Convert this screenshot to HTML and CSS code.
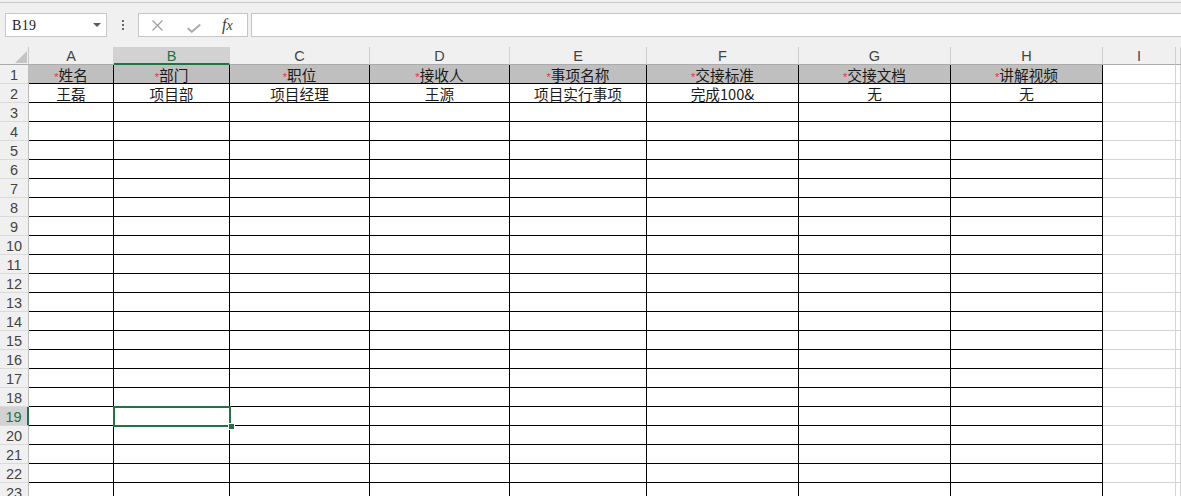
FILE: index.html
```html
<!DOCTYPE html>
<html lang="zh-CN">
<head>
<meta charset="utf-8">
<title>Sheet</title>
<link rel="stylesheet" href="styles.css">
</head>
<body>
<div class="topline"></div>
<div class="fbar">
  <div class="namebox"><span>B19</span><svg class="dd" width="8" height="4" viewBox="0 0 8 4"><polygon points="0,0 8,0 4,4" fill="#5a5a5a"/></svg></div>
  <div class="dots"><i></i><i></i><i></i></div>
  <div class="fbtns">
    <svg class="ico-x" width="11" height="11" viewBox="0 0 11 11"><path d="M0.5 0.5L10.5 10.5M10.5 0.5L0.5 10.5" stroke="#a0a0a0" stroke-width="1.3" fill="none"/></svg>
    <svg class="ico-ok" width="14" height="9" viewBox="0 0 14 9"><path d="M0.7 4.2L4.8 7.8L13.3 0.6" stroke="#a8a8a8" stroke-width="1.9" fill="none"/></svg>
    <span class="fx"><i>f</i><i class="x">x</i></span>
  </div>
  <div class="finput"></div>
</div>
<div class="sheet">
  <div class="corner"><svg width="12" height="12" viewBox="0 0 12 12"><polygon points="12,0 12,12 0,12" fill="#c4c4c4"/></svg></div>
  <div class="ch">A</div><div class="ch on">B</div><div class="ch">C</div><div class="ch">D</div><div class="ch">E</div><div class="ch">F</div><div class="ch">G</div><div class="ch">H</div><div class="ch">I</div><div class="ch"></div>

  <div class="rh">1</div>
  <div class="c hd"><span class="req">*</span>姓名</div>
  <div class="c hd"><span class="req">*</span>部门</div>
  <div class="c hd"><span class="req">*</span>职位</div>
  <div class="c hd"><span class="req">*</span>接收人</div>
  <div class="c hd"><span class="req">*</span>事项名称</div>
  <div class="c hd"><span class="req">*</span>交接标准</div>
  <div class="c hd"><span class="req">*</span>交接文档</div>
  <div class="c hd"><span class="req">*</span>讲解视频</div>
  <div class="g"></div><div class="g"></div>

  <div class="rh">2</div>
  <div class="c">王磊</div><div class="c">项目部</div><div class="c">项目经理</div><div class="c">王源</div><div class="c">项目实行事项</div><div class="c">完成100&amp;</div><div class="c">无</div><div class="c">无</div>
  <div class="g"></div><div class="g"></div>

  <div class="rh">3</div><div class="c"></div><div class="c"></div><div class="c"></div><div class="c"></div><div class="c"></div><div class="c"></div><div class="c"></div><div class="c"></div><div class="g"></div><div class="g"></div>
  <div class="rh">4</div><div class="c"></div><div class="c"></div><div class="c"></div><div class="c"></div><div class="c"></div><div class="c"></div><div class="c"></div><div class="c"></div><div class="g"></div><div class="g"></div>
  <div class="rh">5</div><div class="c"></div><div class="c"></div><div class="c"></div><div class="c"></div><div class="c"></div><div class="c"></div><div class="c"></div><div class="c"></div><div class="g"></div><div class="g"></div>
  <div class="rh">6</div><div class="c"></div><div class="c"></div><div class="c"></div><div class="c"></div><div class="c"></div><div class="c"></div><div class="c"></div><div class="c"></div><div class="g"></div><div class="g"></div>
  <div class="rh">7</div><div class="c"></div><div class="c"></div><div class="c"></div><div class="c"></div><div class="c"></div><div class="c"></div><div class="c"></div><div class="c"></div><div class="g"></div><div class="g"></div>
  <div class="rh">8</div><div class="c"></div><div class="c"></div><div class="c"></div><div class="c"></div><div class="c"></div><div class="c"></div><div class="c"></div><div class="c"></div><div class="g"></div><div class="g"></div>
  <div class="rh">9</div><div class="c"></div><div class="c"></div><div class="c"></div><div class="c"></div><div class="c"></div><div class="c"></div><div class="c"></div><div class="c"></div><div class="g"></div><div class="g"></div>
  <div class="rh">10</div><div class="c"></div><div class="c"></div><div class="c"></div><div class="c"></div><div class="c"></div><div class="c"></div><div class="c"></div><div class="c"></div><div class="g"></div><div class="g"></div>
  <div class="rh">11</div><div class="c"></div><div class="c"></div><div class="c"></div><div class="c"></div><div class="c"></div><div class="c"></div><div class="c"></div><div class="c"></div><div class="g"></div><div class="g"></div>
  <div class="rh">12</div><div class="c"></div><div class="c"></div><div class="c"></div><div class="c"></div><div class="c"></div><div class="c"></div><div class="c"></div><div class="c"></div><div class="g"></div><div class="g"></div>
  <div class="rh">13</div><div class="c"></div><div class="c"></div><div class="c"></div><div class="c"></div><div class="c"></div><div class="c"></div><div class="c"></div><div class="c"></div><div class="g"></div><div class="g"></div>
  <div class="rh">14</div><div class="c"></div><div class="c"></div><div class="c"></div><div class="c"></div><div class="c"></div><div class="c"></div><div class="c"></div><div class="c"></div><div class="g"></div><div class="g"></div>
  <div class="rh">15</div><div class="c"></div><div class="c"></div><div class="c"></div><div class="c"></div><div class="c"></div><div class="c"></div><div class="c"></div><div class="c"></div><div class="g"></div><div class="g"></div>
  <div class="rh">16</div><div class="c"></div><div class="c"></div><div class="c"></div><div class="c"></div><div class="c"></div><div class="c"></div><div class="c"></div><div class="c"></div><div class="g"></div><div class="g"></div>
  <div class="rh">17</div><div class="c"></div><div class="c"></div><div class="c"></div><div class="c"></div><div class="c"></div><div class="c"></div><div class="c"></div><div class="c"></div><div class="g"></div><div class="g"></div>
  <div class="rh">18</div><div class="c"></div><div class="c"></div><div class="c"></div><div class="c"></div><div class="c"></div><div class="c"></div><div class="c"></div><div class="c"></div><div class="g"></div><div class="g"></div>
  <div class="rh on">19</div><div class="c"></div><div class="c sel"></div><div class="c"></div><div class="c"></div><div class="c"></div><div class="c"></div><div class="c"></div><div class="c"></div><div class="g"></div><div class="g"></div>
  <div class="rh">20</div><div class="c"></div><div class="c"></div><div class="c"></div><div class="c"></div><div class="c"></div><div class="c"></div><div class="c"></div><div class="c"></div><div class="g"></div><div class="g"></div>
  <div class="rh">21</div><div class="c"></div><div class="c"></div><div class="c"></div><div class="c"></div><div class="c"></div><div class="c"></div><div class="c"></div><div class="c"></div><div class="g"></div><div class="g"></div>
  <div class="rh">22</div><div class="c"></div><div class="c"></div><div class="c"></div><div class="c"></div><div class="c"></div><div class="c"></div><div class="c"></div><div class="c"></div><div class="g"></div><div class="g"></div>
  <div class="rh">23</div><div class="c"></div><div class="c"></div><div class="c"></div><div class="c"></div><div class="c"></div><div class="c"></div><div class="c"></div><div class="c"></div><div class="g"></div><div class="g"></div>
</div>
</body>
</html>
```
FILE: styles.css
```css
*, *::before, *::after { box-sizing: border-box; margin: 0; padding: 0; }
html, body { width: 1181px; height: 496px; overflow: hidden; background: #fff; }
body { font-family: "Liberation Sans", Arial, sans-serif; }

.topline { height: 3px; background: #f0f0f0; border-bottom: 1px solid #c8c8c8; }

.fbar {
  height: 44px;
  background: #f0f0f0;
  display: flex;
  align-items: flex-start;
  padding: 10px 0 0 5px;
}
.namebox {
  width: 102px;
  height: 24px;
  background: #fff;
  border: 1px solid #c6c6c6;
  display: flex;
  align-items: center;
  padding: 1px 5px 0 6px;
  font: 14px "Liberation Serif", serif;
  color: #222;
  letter-spacing: 0.3px;
}
.namebox .dd { margin-left: auto; margin-top: -1px; }

.dots { margin: 7px 0 0 15px; display: flex; flex-direction: column; gap: 2px; }
.dots i { display: block; width: 2px; height: 2px; background: #6a6a6a; }

.fbtns {
  margin-left: 14px;
  width: 110px;
  height: 24px;
  background: #fff;
  border: 1px solid #c6c6c6;
  display: flex;
  align-items: flex-start;
  padding-left: 13px;
}
.ico-x { margin-top: 6px; }
.ico-ok { margin: 10px 0 0 24px; }
.fx {
  margin: 3px 0 0 21px;
  font: italic 16px "Liberation Serif", serif;
  color: #3c3c3c;
  line-height: 16px;
}
.fx i { font-style: italic; }
.fx .x { font-size: 14px; margin-left: 0; }

.finput {
  margin-left: 3px;
  flex: 1;
  height: 24px;
  background: #fff;
  border: 1px solid #c6c6c6;
  border-right: none;
}

.sheet {
  display: grid;
  grid-template-columns: 29px 85px 116px 140px 140px 137px 152px 152px 152px 73px 1fr;
  grid-template-rows: 18px;
  grid-auto-rows: 19px;
}
.sheet > div {
  border-right: 1px solid #000;
  border-bottom: 1px solid #000;
  white-space: nowrap;
}
.sheet > .corner {
  background: #f0f0f0;
  border-right-color: #c6c6c6;
  border-bottom-color: #ababab;
  display: flex;
  align-items: flex-end;
  justify-content: flex-end;
  padding: 0 1px 1px 0;
}
.sheet > .ch {
  background: #f0f0f0;
  border-right-color: #d0d0d0;
  border-bottom-color: #ababab;
  text-align: center;
  font-size: 14.5px;
  color: #444;
  padding-top: 2px;
  line-height: 15px;
  overflow: hidden;
}
.sheet > .ch.on {
  background: #d2d2d2;
  color: #217346;
  border-bottom: 2px solid #217346;
}
.sheet > .rh {
  background: #f0f0f0;
  border-right-color: #bdbdbd;
  border-bottom-color: #dadada;
  text-align: center;
  font-size: 14.5px;
  color: #444;
  padding-top: 2px;
  line-height: 16px;
  overflow: hidden;
}
.sheet > .rh.on {
  background: #d2d2d2;
  color: #217346;
  border-right: 2px solid #217346;
}
.sheet > .c {
  text-align: center;
  font-family: "Noto Sans CJK SC", "Liberation Sans", sans-serif;
  font-size: 14.67px;
  line-height: 18px;
  padding-top: 1px;
  color: #1a1a1a;
}
.sheet > .hd { background: #bfbfbf; }
.req {
  font-family: "Liberation Sans", sans-serif;
  font-size: 11px;
  color: #f0303c;
}
.sheet > .g { border-color: #d4d4d4; }

.sheet > .sel { position: relative; }
.sel::after {
  content: "";
  position: absolute;
  left: -1px;
  top: -1px;
  width: 118px;
  height: 21px;
  border: 2px solid #217346;
  z-index: 1;
}
.sel::before {
  content: "";
  position: absolute;
  left: 115px;
  top: 17px;
  width: 5px;
  height: 5px;
  background: #217346;
  box-shadow: 0 0 0 1px #fff;
  z-index: 2;
}
```
